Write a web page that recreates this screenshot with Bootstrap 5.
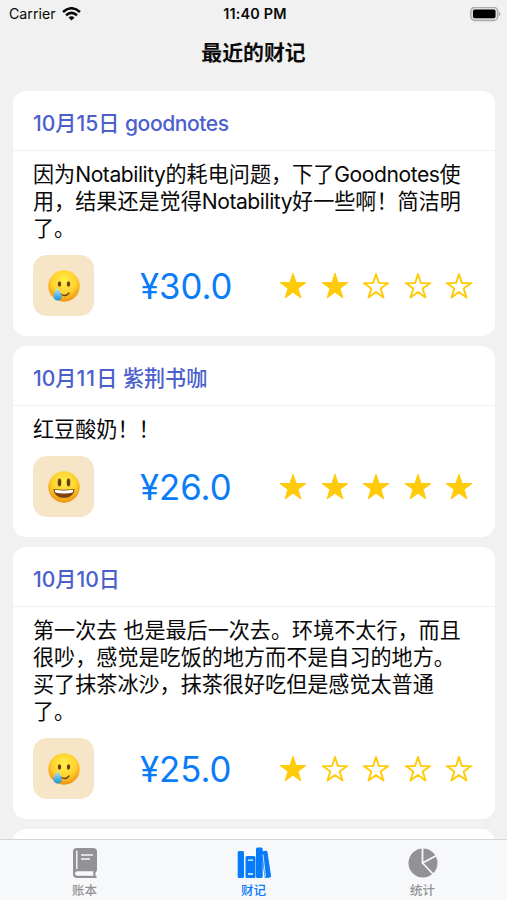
<!DOCTYPE html>
<html lang="zh-CN">
<head>
<meta charset="utf-8">
<meta name="viewport" content="width=device-width, initial-scale=1">
<title>最近的财记</title>
<link href="https://cdn.jsdelivr.net/npm/bootstrap@5.3.0/dist/css/bootstrap.min.css" rel="stylesheet">
<style>
body{background:#f1f1f1;color:#080808;font-family:Inter,"Noto Sans CJK SC",sans-serif;height:900px}
svg{display:block}
.status{height:28px;font-size:14.2px;padding:0 6px 0 9px}
.status>*{flex:1}
.clock{font-weight:600;font-size:14.4px;letter-spacing:.2px;white-space:nowrap}
.title{height:63px;padding-top:11px;font-size:20.9px;font-weight:600;line-height:28px;color:#0b0b0b}
.feed{padding:0 12px 0 13px;gap:10px;height:748px}
.entry{border:0;border-radius:13px;flex:none}
.entry .card-header{height:60px;padding:6px 20px 0;background:none;border-color:#f1f1f1;color:#4b5fcd;font-size:21.1px;font-weight:500;white-space:pre}
.latin{letter-spacing:-.45px}
.ones{letter-spacing:1.1px}
.entry .card-body{padding:10px 20px 20px}
.note{font-size:21.1px;line-height:27px;margin:0 0 13px}
.note>span{display:block;white-space:nowrap}
.mood{width:61px;height:61px;border-radius:14px;background:#f6e5c6}
.price{width:92px;margin-left:46px;padding-top:2px;font-size:34.7px;color:#0b7cf8;line-height:59px;white-space:nowrap}
.stars{gap:13.6px;margin-left:47px;padding-top:1px}
.tabs{height:61px;background:#f7f8f9;border-top:1px solid #d6d6d7;color:#929294;font-size:12.5px}
.tab-item{flex:1;padding-top:6px}
.tab-item svg{height:34px}
.tab-item.active{color:#087bfb}
.tab-item span{line-height:18px;margin-top:2px;font-weight:500}
</style>
</head>
<body class="overflow-hidden">
<svg width="0" height="0" class="position-absolute" aria-hidden="true">
<defs>
<radialGradient id="skin" cx=".5" cy=".35" r=".65"><stop offset="0" stop-color="#fff04d"/><stop offset=".6" stop-color="#ffd02d"/><stop offset="1" stop-color="#ee9010"/></radialGradient>
<linearGradient id="drop" x1="0" y1="0" x2="0" y2="1"><stop offset="0" stop-color="#b9efff"/><stop offset="1" stop-color="#1b93d8"/></linearGradient>
<symbol id="tear" viewBox="0 0 32 32"><circle cx="16" cy="16" r="15.700" fill="url(#skin)"/><ellipse cx="11.500" cy="14" rx="1.700" ry="2.700" fill="#684012"/><ellipse cx="20.500" cy="14" rx="1.700" ry="2.700" fill="#684012"/><path d="M12.500 24q5 3.500 8.500-1" fill="none" stroke="#774510" stroke-width="1.500" stroke-linecap="round"/><path d="M9.800 17.500C8.500 20.500 5 23.500 5.500 27c.5 4.500 8 4.500 8.300 0C14 23.500 11 20.500 9.800 17.500z" fill="url(#drop)"/></symbol>
<symbol id="grin" viewBox="0 0 32 32"><circle cx="16" cy="16" r="15.700" fill="url(#skin)"/><ellipse cx="11.500" cy="11.500" rx="1.800" ry="4" fill="#684012"/><ellipse cx="20.500" cy="11.500" rx="1.800" ry="4" fill="#684012"/><path d="M5.500 18q10.500 1.500 21 0c0 12-21 12-21 0z" fill="#82440d"/><path d="M6.700 18.800q9.300 1.300 18.600 0l-.5 2.700q-8.800 1.800-17.600 0z" fill="#fff"/></symbol>
<symbol id="full" viewBox="0 0 28 28"><path d="M14 1.200l3.100 9.300 9.800.1-7.900 5.800 2.900 9.500-7.900-5.700-7.900 5.700 2.900-9.500-7.900-5.800 9.800-.1z" fill="#ffcb08" stroke="#ffcb08" stroke-linejoin="round"/></symbol>
<symbol id="empty" viewBox="0 0 28 28"><path d="M14 2l2.900 9 9.300.1-7.500 5.500 2.800 8.900-7.500-5.400-7.500 5.400 2.800-8.900-7.500-5.500 9.300-.1z" fill="none" stroke="#ffcb08" stroke-width="1.900" stroke-linejoin="round"/></symbol>
</defs>
</svg>

<header class="status d-flex align-items-center">
  <div class="d-flex align-items-center"><span>Carrier</span>
    <svg width="19" height="14" viewBox="0 0 19 14" style="margin-left:6px"><g fill="none" stroke="#090909" stroke-width="2.500"><path d="M1 5Q9.500-2.500 18 5"/><path d="M4 8.300q5.500-4.800 11 0"/></g><path d="M6.500 10.400q3-2.500 6 0l-3 3.100z" fill="#090909"/></svg>
  </div>
  <div class="clock text-center">11:40 PM</div>
  <div class="d-flex justify-content-end"><svg width="31" height="15" viewBox="0 0 31 15"><rect x=".8" y=".3" width="27" height="13.200" rx="4" fill="#ddd" stroke="#aaa" stroke-width="1.300"/><rect x="3" y="2.500" width="22.500" height="8.800" rx="1.700" fill="#000"/><path d="M29 4.500q3 2.400 0 4.800z" fill="#aaa"/></svg></div>
</header>
<h1 class="title text-center m-0">最近的财记</h1>

<main class="feed d-flex flex-column overflow-hidden">
  <article class="card entry">
    <div class="card-header d-flex align-items-center">10月15日 <span class="latin">goodnotes</span></div>
    <div class="card-body">
      <p class="note"><span>因为<span class="latin">Notability</span>的耗电问题，下了<span class="latin">Goodnotes</span>使</span><span>用，结果还是觉得<span class="latin">Notability</span>好一些啊！简洁明</span><span>了。</span></p>
      <div class="d-flex align-items-center">
        <div class="mood d-flex align-items-center justify-content-center"><svg width="32" height="32"><use href="#tear"/></svg></div>
        <div class="price">¥30.0</div>
        <div class="stars d-flex"><svg width="28" height="28"><use href="#full"/></svg><svg width="28" height="28"><use href="#full"/></svg><svg width="28" height="28"><use href="#empty"/></svg><svg width="28" height="28"><use href="#empty"/></svg><svg width="28" height="28"><use href="#empty"/></svg></div>
      </div>
    </div>
  </article>
  <article class="card entry">
    <div class="card-header d-flex align-items-center">10月<span class="ones">11</span>日 紫荆书咖</div>
    <div class="card-body">
      <p class="note"><span>红豆酸奶！！</span></p>
      <div class="d-flex align-items-center">
        <div class="mood d-flex align-items-center justify-content-center"><svg width="32" height="32"><use href="#grin"/></svg></div>
        <div class="price">¥26.0</div>
        <div class="stars d-flex"><svg width="28" height="28"><use href="#full"/></svg><svg width="28" height="28"><use href="#full"/></svg><svg width="28" height="28"><use href="#full"/></svg><svg width="28" height="28"><use href="#full"/></svg><svg width="28" height="28"><use href="#full"/></svg></div>
      </div>
    </div>
  </article>
  <article class="card entry">
    <div class="card-header d-flex align-items-center">10月10日</div>
    <div class="card-body">
      <p class="note"><span>第一次去 也是最后一次去。环境不太行，而且</span><span>很吵，感觉是吃饭的地方而不是自习的地方。</span><span>买了抹茶冰沙，抹茶很好吃但是感觉太普通</span><span>了。</span></p>
      <div class="d-flex align-items-center">
        <div class="mood d-flex align-items-center justify-content-center"><svg width="32" height="32"><use href="#tear"/></svg></div>
        <div class="price">¥25.0</div>
        <div class="stars d-flex"><svg width="28" height="28"><use href="#full"/></svg><svg width="28" height="28"><use href="#empty"/></svg><svg width="28" height="28"><use href="#empty"/></svg><svg width="28" height="28"><use href="#empty"/></svg><svg width="28" height="28"><use href="#empty"/></svg></div>
      </div>
    </div>
  </article>
  <article class="card entry"><div class="card-header"></div></article>
</main>

<nav class="tabs d-flex">
  <div class="tab-item d-flex flex-column align-items-center"><svg width="26" height="34" viewBox="0 0 26 34"><path d="M5 2h16q4 0 4 3.500V24q0 1.600-1.200 2-1 2 0 4 1 .2 1 1t-1 1H5q-4 0-4-4V5.500Q1 2 5 2z" fill="currentColor"/><path d="M4.800 4.500V23M9 9h12M9 13h9" stroke="#f7f8f9" stroke-width="1.400" fill="none"/><path d="M5.500 25.300h16q-1 2 0 4.400h-16q-2.500 0-2.500-2.200t2.500-2.200z" fill="#f7f8f9"/></svg><span>账本</span></div>
  <div class="tab-item active d-flex flex-column align-items-center"><svg width="34" height="34" viewBox="0 0 34 34"><g fill="currentColor"><rect x=".7" y="5" width="6.300" height="27" rx="1.500"/><rect x="8.500" y="10" width="10" height="22" rx="1.500"/><rect x="19" y="1.500" width="6.700" height="30.500" rx="1.500"/><path d="M24.500 5.500l4.200-.7q1.500-.2 1.800 1.200l3.500 23.800q.2 1.500-1.200 1.800l-3.400.5q-1.500.2-1.800-1.300L24.500 9z"/></g><path d="M11 14.200h5M11 28h5" stroke="#f7f8f9" stroke-width="1.300"/><path d="M26 8.500l2.500 22" stroke="#f7f8f9" stroke-width=".8"/></svg><span>财记</span></div>
  <div class="tab-item d-flex flex-column align-items-center"><svg width="30" height="34" viewBox="0 0 30 34"><circle cx="15" cy="17" r="14.500" fill="currentColor"/><path d="M14.500 1v16L25 28M14.500 17l14-7.500" fill="none" stroke="#f7f8f9" stroke-width="1.800"/></svg><span>统计</span></div>
</nav>
<script src="https://cdn.jsdelivr.net/npm/bootstrap@5.3.0/dist/js/bootstrap.bundle.min.js"></script>
</body>
</html>
